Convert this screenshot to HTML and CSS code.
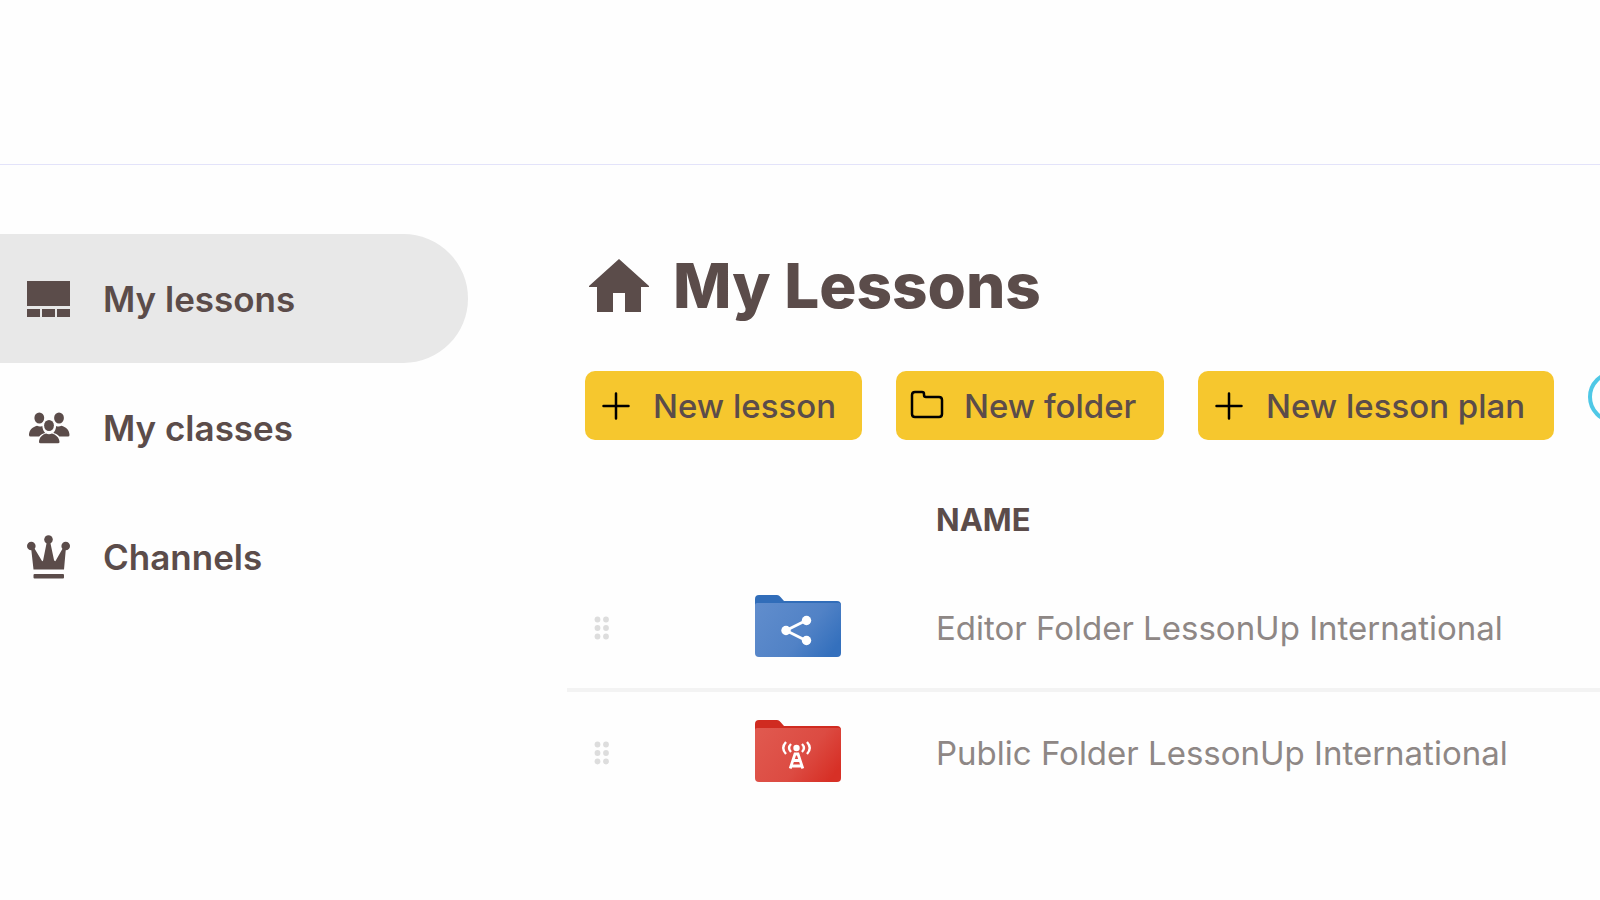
FILE: index.html
```html
<!DOCTYPE html>
<html lang="en">
<head>
<meta charset="utf-8">
<title>My Lessons</title>
<meta name="viewport" content="width=device-width, initial-scale=1">
<link rel="stylesheet" href="styles.css">
</head>
<body>
<header class="topbar"></header>
<div class="layout">
  <nav class="sidebar" aria-label="Main">
    <a class="nav-item nav-item-active" href="#lessons" aria-current="page">
      <svg class="nav-icon" viewBox="0 0 44 44" aria-hidden="true"><path d="M0 4h43v25H0zM0 32h13v8H0zM15 32h13v8H15zM30 32h13v8H30z"/></svg>
      <span>My lessons</span>
    </a>
    <a class="nav-item" href="#classes">
      <svg class="nav-icon" viewBox="0 0 44 44" aria-hidden="true">
        <ellipse cx="12.300" cy="12" rx="4.900" ry="5.500"/><ellipse cx="32" cy="12" rx="4.900" ry="5.500"/>
        <ellipse cx="22" cy="19.500" rx="4.900" ry="5.600"/>
        <path d="M2 29c0-5 4-8.200 8-9.200 2 1 3.500 1 5.300.2.300 3 1.200 5.200 2.900 6.900-2.500.5-4.500 1.700-6 3.600H3.500Q2 30.500 2 29zM42.500 29c0-5-4-8.200-8-9.200-2 1-3.500 1-5.300.2-.3 3-1.200 5.200-2.900 6.900 2.500.5 4.500 1.700 6 3.600H41q1.500 0 1.500-1.500z"/>
        <path d="M12 36c0-4.500 3.500-7.500 7-8.500 2 1 4 1 6 0 3.500 1 7.500 4 7.500 8.500q0 1.300-1.500 1.300H13.500Q12 37.300 12 36z"/>
      </svg>
      <span>My classes</span>
    </a>
    <a class="nav-item" href="#channels">
      <svg class="nav-icon" viewBox="0 0 44 44" aria-hidden="true">
        <circle cx="4.300" cy="11" r="4.300"/><circle cx="21.500" cy="4.500" r="4.300"/><circle cx="38.700" cy="11" r="4.300"/>
        <path d="M4 12l2-1 9 15q1 .5 1.200-1L20 6h3l4 19q.5 1.500 1.500 1l8-14 2.500 0-2 22.500H6.500z"/><rect x="6.500" y="39" width="30.500" height="4.500" rx="1"/>
      </svg>
      <span>Channels</span>
    </a>
  </nav>
  <main class="content">
    <h1 class="title">
      <svg class="title-icon" viewBox="0 0 60 54" aria-hidden="true"><path d="M30 0l30 27v1h-8v25H36V34H24v19H8V28H0v-1z"/></svg>
      <span>My Lessons</span>
    </h1>
    <div class="actions">
      <button class="action action-lesson" type="button">
        <svg class="action-icon" viewBox="0 0 34 34" aria-hidden="true"><path d="M17 4.500v25M4.500 17h25"/></svg>
        <span>New lesson</span>
      </button>
      <button class="action action-folder" type="button">
        <svg class="action-icon" viewBox="0 0 34 34" aria-hidden="true"><path d="M5 3h7q2 0 2 2v1q0 2 2 2h13q3 0 3 3v14q0 3-3 3H5q-3 0-3-3V6q0-3 3-3z"/></svg>
        <span>New folder</span>
      </button>
      <button class="action action-plan" type="button">
        <svg class="action-icon" viewBox="0 0 34 34" aria-hidden="true"><path d="M17 4.500v25M4.500 17h25"/></svg>
        <span>New lesson plan</span>
      </button>
      <button class="help" type="button" aria-label="Help"></button>
    </div>
    <table class="files">
      <thead>
        <tr><th class="col-drag"></th><th class="col-icon"></th><th class="col-name" scope="col">NAME</th></tr>
      </thead>
      <tbody>
        <tr>
          <td class="col-drag"><svg class="grip" viewBox="0 0 16 24" aria-hidden="true"><g><circle cx="3.500" cy="3.500" r="2.900"/><circle cx="12" cy="3.500" r="2.900"/><circle cx="3.500" cy="12" r="2.900"/><circle cx="12" cy="12" r="2.900"/><circle cx="3.500" cy="20.500" r="2.900"/><circle cx="12" cy="20.500" r="2.900"/></g></svg></td>
          <td class="col-icon">
            <svg class="folder" viewBox="0 0 86 62" aria-hidden="true">
              <defs><linearGradient id="blue" x1="0" y1=".2" x2="1" y2=".7"><stop offset="0" stop-color="#5f8ccc"/><stop offset=".6" stop-color="#5182c6"/><stop offset="1" stop-color="#3470bd"/></linearGradient></defs>
              <path fill="#316db9" d="M0 4q0-4 4-4h18q2 0 3.500 2l3.500 4h53q4 0 4 4v48H0z"/>
              <path fill="url(#blue)" d="M0 10q0-2 2-2h82q2 0 2 2v48q0 4-4 4H4q-4 0-4-4z"/>
              <path d="M51 25.500L31 35.500l20 10" fill="none" stroke="#fff" stroke-width="2.800"/>
              <g fill="#fff"><circle cx="51.500" cy="25.500" r="4.700"/><circle cx="31" cy="35.500" r="4.700"/><circle cx="51.500" cy="45.500" r="4.700"/></g>
            </svg>
          </td>
          <td class="col-name">Editor Folder LessonUp International</td>
        </tr>
        <tr>
          <td class="col-drag"><svg class="grip" viewBox="0 0 16 24" aria-hidden="true"><g><circle cx="3.500" cy="3.500" r="2.900"/><circle cx="12" cy="3.500" r="2.900"/><circle cx="3.500" cy="12" r="2.900"/><circle cx="12" cy="12" r="2.900"/><circle cx="3.500" cy="20.500" r="2.900"/><circle cx="12" cy="20.500" r="2.900"/></g></svg></td>
          <td class="col-icon">
            <svg class="folder" viewBox="0 0 86 62" aria-hidden="true">
              <defs><linearGradient id="red" x1="0" y1=".2" x2="1" y2=".7"><stop offset="0" stop-color="#e0584e"/><stop offset=".6" stop-color="#dc4b42"/><stop offset="1" stop-color="#d73026"/></linearGradient></defs>
              <path fill="#d02b20" d="M0 4q0-4 4-4h18q2 0 3.500 2l3.500 4h53q4 0 4 4v48H0z"/>
              <path fill="url(#red)" d="M0 10q0-2 2-2h82q2 0 2 2v48q0 4-4 4H4q-4 0-4-4z"/>
              <circle cx="41.500" cy="28" r="3.200" fill="#fff"/>
              <path d="M31 22q-5.500 6 0 12M36 24q-4 4 0 8M47 24q4 4 0 8M52 22q5.500 6 0 12" fill="none" stroke="#fff" stroke-width="2.400"/>
              <path d="M35.200 48.500L40 34h3l4.800 14.500M38.500 40.500h6M37 46h9" fill="none" stroke="#fff" stroke-width="2.800"/>
            </svg>
          </td>
          <td class="col-name">Public Folder LessonUp International</td>
        </tr>
      </tbody>
    </table>
  </main>
</div>
</body>
</html>
```
FILE: styles.css
```css
* { box-sizing: border-box; }

body {
  margin: 0;
  min-height: 100vh;
  overflow-x: hidden;
  background: #fefefe;
  color: #5b4c4a;
  font-family: Inter, "Liberation Sans", sans-serif;
}

.topbar {
  height: 165px;
  border-bottom: 1px solid #e3e3fa;
}

.layout {
  display: grid;
  grid-template-columns: 468px minmax(0, 1fr);
  column-gap: 99px;
  padding-top: 69px;
}

.sidebar { display: flex; flex-direction: column; }

.nav-item {
  display: flex;
  align-items: center;
  gap: 32px;
  height: 129px;
  padding-left: 27px;
  border-radius: 0 65px 65px 0;
  color: inherit;
  font-size: 35px;
  font-weight: 600;
  text-decoration: none;
}

.nav-item-active { background: #e8e8e8; }

.nav-icon { width: 44px; height: 44px; fill: currentColor; }

.content { overflow: hidden; padding-top: 16px; }

.title {
  display: flex;
  align-items: center;
  gap: 24px;
  margin: 0 0 49px;
  padding-left: 22px;
  font-size: 62px;
  line-height: 72px;
  font-weight: 800;
}

.title-icon { width: 60px; height: 54px; fill: currentColor; }

.actions {
  display: flex;
  align-items: flex-start;
  gap: 34px;
  padding-left: 18px;
}

.action {
  display: flex;
  flex-shrink: 0;
  align-items: center;
  gap: 20px;
  height: 69px;
  padding: 0 24px 0 14px;
  border: 0;
  border-radius: 10px;
  background: #f6c72e;
  color: inherit;
  font: 500 33px Inter, "Liberation Sans", sans-serif;
  white-space: nowrap;
}

.action-lesson { min-width: 277px; }
.action-folder { min-width: 268px; }
.action-plan { min-width: 356px; }

.action-icon {
  width: 34px;
  height: 34px;
  fill: none;
  stroke: #000;
  stroke-width: 2.5;
  stroke-linecap: round;
}

.help {
  flex-shrink: 0;
  width: 52px;
  height: 52px;
  padding: 0;
  border: 4px solid #4fc8e6;
  border-radius: 50%;
  background: transparent;
}

.files {
  width: 100%;
  margin-top: 31px;
  border-collapse: separate;
  border-spacing: 0;
  table-layout: fixed;
  text-align: left;
}

.files th {
  height: 96px;
  padding: 0;
  font-size: 31px;
  font-weight: 700;
}

.files td {
  height: 125px;
  padding: 0;
  border-bottom: 4px solid #f3f3f3;
  color: #8e8785;
  font-size: 33px;
  white-space: nowrap;
}

.files tr:last-child td { border-color: transparent; }

.files .col-drag { width: 188px; padding-left: 27px; }
.files .col-icon { width: 181px; }

.grip { display: block; width: 16px; height: 24px; fill: #dddddd; }
.folder { display: block; width: 86px; height: 62px; margin-bottom: 4px; }
```
